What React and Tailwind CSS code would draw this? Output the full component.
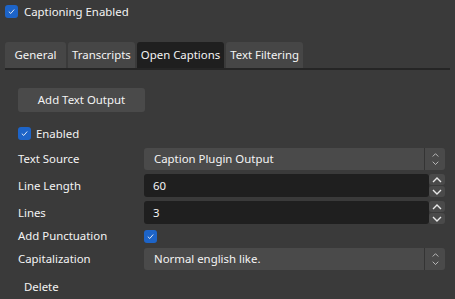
import React from 'react';

const font = { fontFamily: '"Noto Sans", "Open Sans", sans-serif' };

const Check = ({ className = '' }) => (
    <span className={`flex items-center justify-center w-[13px] h-[13px] rounded-[3px] bg-[#1d64c8] ${className}`}>
        <svg width="9" height="9" viewBox="0 0 10 10" fill="none">
            <path d="M2 5.2 L4.2 7.2 L8 2.8" stroke="#dfe8f6" strokeWidth="1.1" />
        </svg>
    </span>
);

const Chev = ({ up, size = 8, w = 1.2 }) => (
    <svg width={size} height={size * 0.6} viewBox="0 0 10 6" fill="none">
        <path d={up ? 'M1 5 L5 1 L9 5' : 'M1 1 L5 5 L9 1'} stroke="#e8e8e8" strokeWidth={w} />
    </svg>
);

const Select = ({ value }) => (
    <div className="flex h-[22px] w-[301px] rounded-[3px] bg-[#4a4a4a]">
        <div className="flex-1 flex items-center pl-[10px]">{value}</div>
        <div className="w-[21px] border-l border-[#343434] flex flex-col items-center justify-center gap-[3px]">
            <Chev up size={7} w={1} />
            <Chev size={7} w={1} />
        </div>
    </div>
);

const Spin = ({ value }) => (
    <div className="flex h-[23px] w-[301px]">
        <div className="flex-1 flex items-center pl-[9px] rounded-[3px] bg-[#1f1f1f]">{value}</div>
        <div className="w-[16px] flex flex-col gap-[1px]">
            <div className="flex-1 rounded-[3px] bg-[#4a4a4a] flex items-center justify-center">
                <Chev up size={10} w={1.4} />
            </div>
            <div className="flex-1 rounded-[3px] bg-[#4a4a4a] flex items-center justify-center">
                <Chev size={10} w={1.4} />
            </div>
        </div>
    </div>
);

const tabs = ['General', 'Transcripts', 'Open Captions', 'Text Filtering'];

export default function App() {
    return (
        <div className="w-[455px] h-[299px] bg-[#3a3a3a] text-[#f4f4f4] text-[11.4px] leading-[16px] overflow-hidden" style={font}>
            <div className="flex items-center gap-[6px] pl-[5px] pt-[5px] h-[13px] box-content">
                <Check />
                <span>Captioning Enabled</span>
            </div>

            <div className="mt-[24px] mx-[5px] flex gap-[2px] border-b-2 border-[#252525]">
                {tabs.map(t => (
                    <div
                        key={t}
                        className={`h-[26px] min-w-[61px] px-[4px] flex items-center justify-center rounded-t-[3px] ${
                            t === 'Open Captions' ? 'bg-[#1f1f1f]' : 'bg-[#464646]'
                        }`}
                    >
                        {t}
                    </div>
                ))}
            </div>

            <div className="pl-[18px]">
                <button className="mt-[18px] w-[127px] h-[24px] rounded-[3px] bg-[#4a4a4a]">
                    Add Text Output
                </button>

                <div className="mt-[15px] flex items-center gap-[5px] h-[13px]">
                    <Check />
                    <span>Enabled</span>
                </div>

                <div className="mt-[8px] flex flex-col gap-[4px]">
                    <div className="flex items-center">
                        <span className="w-[126px]">Text Source</span>
                        <Select value="Caption Plugin Output" />
                    </div>
                    <div className="flex items-center">
                        <span className="w-[126px]">Line Length</span>
                        <Spin value="60" />
                    </div>
                    <div className="flex items-center">
                        <span className="w-[126px]">Lines</span>
                        <Spin value="3" />
                    </div>
                    <div className="flex items-center h-[16px]">
                        <span className="w-[126px]">Add Punctuation</span>
                        <Check />
                    </div>
                    <div className="flex items-center">
                        <span className="w-[126px]">Capitalization</span>
                        <Select value="Normal english like." />
                    </div>
                </div>

                <div className="mt-[9px] pl-[6px]">Delete</div>
            </div>
        </div>
    );
}
